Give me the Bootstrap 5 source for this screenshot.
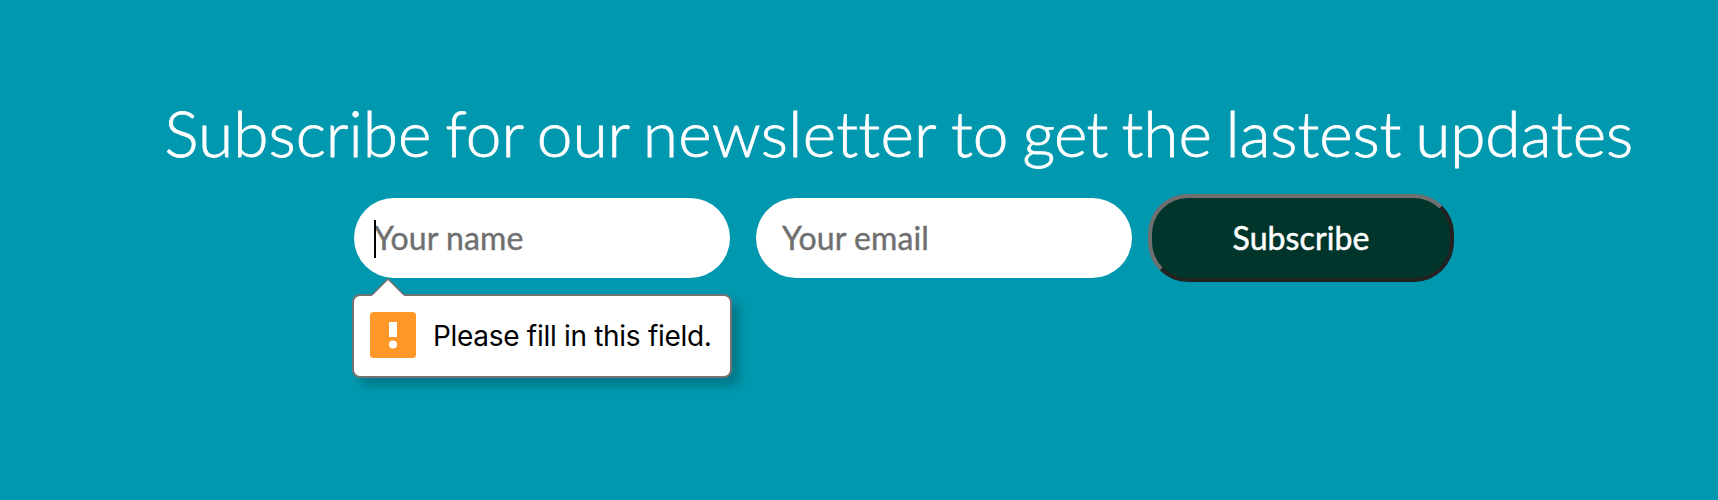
<!DOCTYPE html>
<html lang="en">
<head>
<meta charset="utf-8">
<meta name="viewport" content="width=device-width, initial-scale=1">
<title>Newsletter</title>
<link href="https://cdn.jsdelivr.net/npm/bootstrap@5.3.0/dist/css/bootstrap.min.css" rel="stylesheet">
<style>
body { font-family: Lato, sans-serif; background: #0098ae; }
.newsletter { height: 500px; padding-top: 94px; overflow: hidden; }
.headline { font-size: 64px; font-weight: 300; line-height: 77px; margin: 0 0 23px 164.5px; word-spacing: -3.4px; font-variant-ligatures: none; -webkit-text-stroke: .8px #fff; white-space: nowrap; }
.headline .loose { letter-spacing: .25px; }
.headline .tight { letter-spacing: -.8px; }
.headline .snug { letter-spacing: -.12px; }
.signup { margin-left: 354px; }
.field { width: 376px; height: 80px; margin-right: 26px; }
.field .form-control { height: 80px; border: 0; border-radius: 40px; padding: 0 26px 2px; font-size: 32px; line-height: 38px; color: #000; -webkit-text-stroke: .4px #6f6f6f; letter-spacing: .1px; }
.field .form-control::placeholder { color: #6f6f6f; opacity: 1; }
.field .is-current { padding-left: 20px; }
.caret { left: 20px; top: 22px; width: 2px; height: 38px; background: #000; }
.send { width: 306px; height: 88px; margin-left: -10px; border: 4px solid; border-color: #6f6f6f #222 #222 #6f6f6f; border-radius: 40px; background: #00352c; color: #fff; font-size: 32px; line-height: 38px; padding: 0; -webkit-text-stroke: .5px #fff; letter-spacing: .1px; }
.hint { left: -2px; top: 96px; width: 380px; height: 84px; border: 2px solid #737373; border-radius: 8px; background: #fff; box-shadow: 8px 8px 8px rgba(0,0,0,.2); padding-left: 16px; color: #000; font: 28px/34px Inter, sans-serif; letter-spacing: -.3px; white-space: nowrap; }
.hint .pointer { left: 17px; top: -18px; }
.hint .alert-icon { margin: 0 17px 2px 0; }
</style>
</head>
<body>
<section class="newsletter">
  <h1 class="headline text-white">Subscribe for our <span class="loose">newsletter</span> to <span class="tight">get</span> <span class="snug">the lastest updates</span></h1>
  <form class="signup d-flex align-items-center" novalidate>
    <div class="field position-relative">
      <input class="form-control is-current shadow-none" type="text" placeholder="Your name" aria-label="Your name">
      <span class="caret position-absolute"></span>
      <div class="hint position-absolute d-flex align-items-center" role="alert">
        <svg class="pointer position-absolute" width="34" height="19" viewBox="0 0 34 19"><path d="M1 17 17 1 33 17V19H1Z" fill="#fff"/><path d="M1 17 17 1 33 17" fill="none" stroke="#737373" stroke-width="1.5"/></svg>
        <svg class="alert-icon" width="46" height="46" viewBox="0 0 46 46"><rect width="46" height="46" rx="3.5" fill="#ff9829"/><path d="M19 10h8v15h-8Z" fill="#fff"/><circle cx="23" cy="32.5" r="4" fill="#fff"/></svg>
        <span class="hint-text">Please fill in this field.</span>
      </div>
    </div>
    <div class="field">
      <input class="form-control shadow-none" type="email" placeholder="Your email" aria-label="Your email">
    </div>
    <button class="send" type="button">Subscribe</button>
  </form>
</section>
<script src="https://cdn.jsdelivr.net/npm/bootstrap@5.3.0/dist/js/bootstrap.bundle.min.js"></script>
</body>
</html>
